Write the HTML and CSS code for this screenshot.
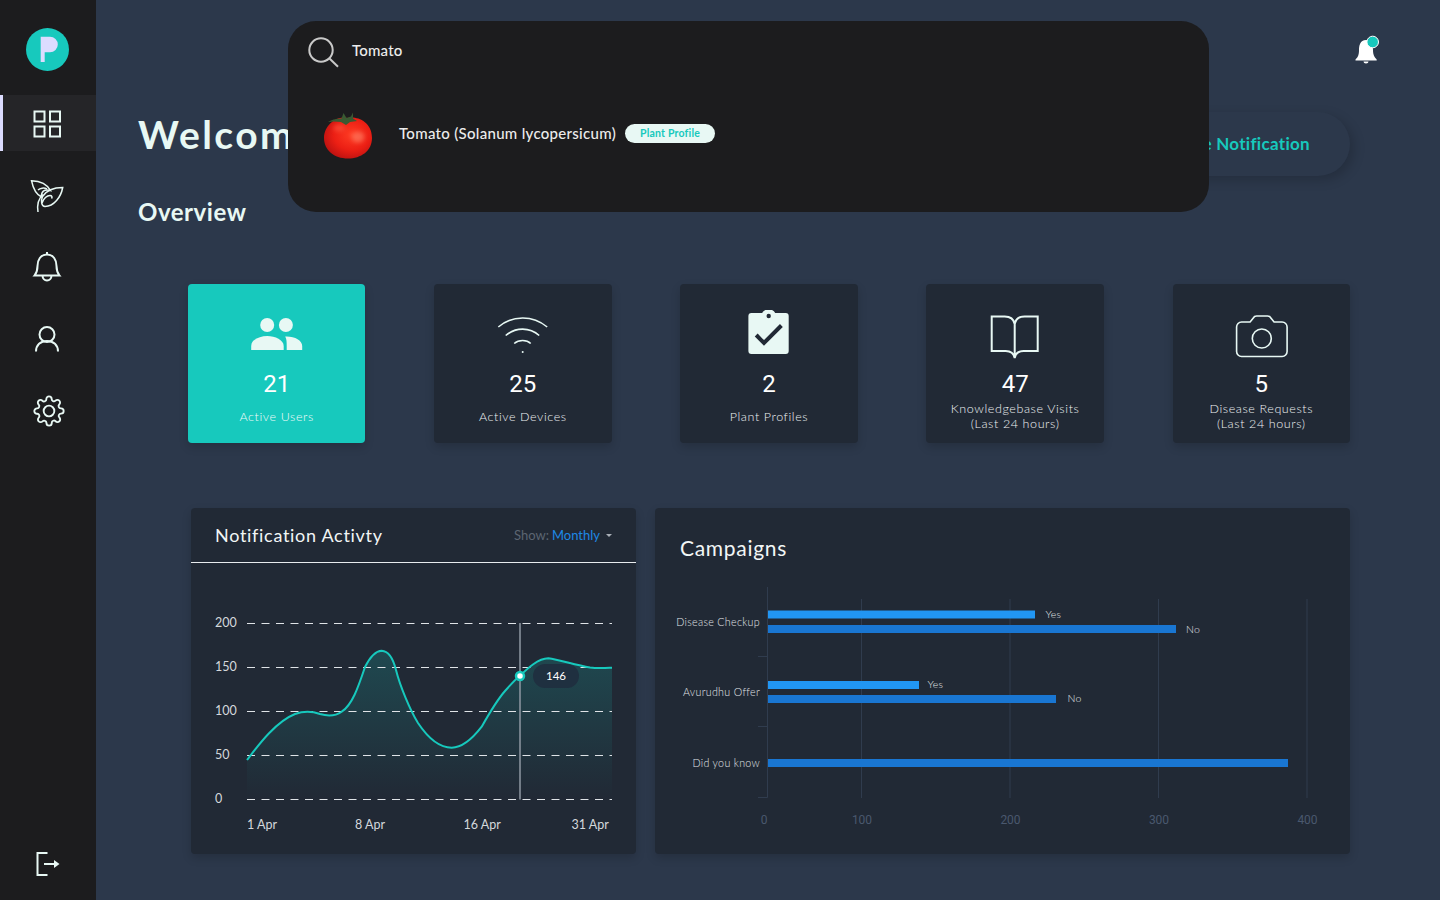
FILE: index.html
```html
<!DOCTYPE html>
<html lang="en">
<head>
<meta charset="utf-8">
<title>Dashboard</title>
<link rel="stylesheet" href="styles.css">
</head>
<body>
<div class="app">
  <aside class="sidebar">
    <div class="logo">
      <svg class="logo-svg" viewBox="26 28 43 43"><circle cx="47.5" cy="49.5" r="21.5" fill="#17c9bd"/><path d="M40.7 36.7H50a7.8 7.8 0 0 1 0 15.6H44.7V62H40.7Z" fill="#dcdcff"/></svg>
    </div>
    <nav class="nav">
      <a class="nav-item active"><svg class="nav-icon" viewBox="0 0 96 56"><g class="ico"><rect x="34.5" y="16.5" width="10" height="10"/><rect x="50" y="16.5" width="10" height="10"/><rect x="34.5" y="31.5" width="10" height="10"/><rect x="50" y="31.5" width="10" height="10"/></g></svg></a>
      <a class="nav-item"><svg class="nav-icon" viewBox="0 167 96 56"><g class="ico thin"><path d="M31.500 180.700C39 181 47 184 50.500 190.500C44 188.500 41 192 41.500 197C36 194.500 33 188 31.500 180.700Z"/><path d="M38 190C40 188 44 187.500 47 189"/><path d="M62.700 187.500C61 197 54 206.500 45 206.500C41.500 206.500 40.500 201 42.500 196.500C46.500 190.500 54 187.500 62.700 187.500Z"/><path d="M38 212C37 205 39 198 43 194.500"/><path d="M42 203C43.500 198.500 47 195.500 50 195.500C52 195.500 52.500 197 51.500 198.500"/></g></svg></a>
      <a class="nav-item"><svg class="nav-icon" viewBox="0 239 96 56"><g class="ico"><path d="M47 254.500C40.500 254.500 37.500 260 37.500 266C37.500 271 36.500 273 34.500 275.500H59.500C57.500 273 56.500 271 56.500 266C56.500 260 53.500 254.500 47 254.500ZM47 252V254.500M42.500 275.500a4.500 5 0 0 0 9 0"/></g></svg></a>
      <a class="nav-item"><svg class="nav-icon" viewBox="0 311 96 56"><g class="ico"><circle cx="47" cy="334.500" r="7.500"/><path d="M36 351.500C36 345 40.500 341 47 341C53.500 341 58 345 58 351.500"/></g></svg></a>
      <a class="nav-item"><svg class="gear-icon" viewBox="0 0 24 24"><g class="ico gear"><circle cx="12" cy="12" r="4"/><path d="M19.400 15a1.650 1.650 0 0 0 .33 1.820l.06.06a2 2 0 0 1 0 2.830 2 2 0 0 1-2.830 0l-.06-.06a1.650 1.650 0 0 0-1.820-.33 1.650 1.650 0 0 0-1 1.510V21a2 2 0 0 1-2 2 2 2 0 0 1-2-2v-.09A1.650 1.650 0 0 0 9 19.400a1.650 1.650 0 0 0-1.820.33l-.06.06a2 2 0 0 1-2.830 0 2 2 0 0 1 0-2.830l.06-.06a1.650 1.650 0 0 0 .33-1.820 1.650 1.650 0 0 0-1.510-1H3a2 2 0 0 1-2-2 2 2 0 0 1 2-2h.09A1.650 1.650 0 0 0 4.600 9a1.650 1.650 0 0 0-.33-1.820l-.06-.06a2 2 0 0 1 0-2.830 2 2 0 0 1 2.830 0l.06.06a1.650 1.650 0 0 0 1.820.33H9a1.650 1.650 0 0 0 1-1.510V3a2 2 0 0 1 2-2 2 2 0 0 1 2 2v.09a1.650 1.650 0 0 0 1 1.510 1.650 1.650 0 0 0 1.820-.33l.06-.06a2 2 0 0 1 2.830 0 2 2 0 0 1 0 2.830l-.06.06a1.650 1.650 0 0 0-.33 1.820V9a1.650 1.650 0 0 0 1.510 1H21a2 2 0 0 1 2 2 2 2 0 0 1-2 2h-.09a1.650 1.650 0 0 0-1.510 1z"/></g></svg></a>
    </nav>
    <a class="logout"><svg class="nav-icon" viewBox="0 836 96 56"><path class="ico" d="M47.500 853H37.500V875H47.500M44 864H55"/><path d="M54 860L59.500 864L54 868Z" fill="#e8f8f4"/></svg></a>
  </aside>

  <main class="main">
    <div class="topbar">
      <svg class="top-bell" viewBox="1352 32 28 32">
        <path d="M1366 40C1360 40 1359 46 1359 50C1359 55 1358 57 1355.500 59.500V60.500H1376.700V59.500C1374.500 57 1373 55 1373 50C1373 46 1372 40 1366 40Z" fill="#fff"/>
        <path d="M1363.500 61.500h5a2.500 2 0 0 1-5 0Z" fill="#fff"/>
        <circle cx="1372.700" cy="42" r="5.800" fill="#17c9bd" stroke="#fff" stroke-width="1"/>
      </svg>
    </div>

    <div class="heading-row">
      <h1 class="welcome">Welcome</h1>
      <button class="create-btn">Create Notification</button>
    </div>
    <h2 class="overview">Overview</h2>

    <section class="stats">
      <div class="stat stat-active">
        <svg class="stat-icon" viewBox="188 310 177 54"><g fill="#e8f8f4"><circle cx="267" cy="325" r="7"/><circle cx="285.700" cy="325" r="7"/><path d="M251 350V346C251 340 259 336 267 336C275 336 283.500 340 283.500 346V350Z"/><path d="M285 336.500C294 336 302 340 302 346V350H286.500V346C286.500 342 286.500 339 285 336.500Z"/></g></svg>
        <div class="stat-num">21</div>
        <div class="stat-label">Active Users</div>
      </div>
      <div class="stat">
        <svg class="stat-icon" viewBox="434.500 310 177 54"><g class="line-ico"><path d="M498.600 327C513 315 533 315 547.500 327"/><path d="M506 335.500C516 327 530 327 539.500 335.500"/><path d="M514.500 343.500C519 339.500 527 339.500 531 343.500"/></g><circle cx="523" cy="352" r="1" fill="#e8f8f4"/></svg>
        <div class="stat-num">25</div>
        <div class="stat-label">Active Devices</div>
      </div>
      <div class="stat">
        <svg class="stat-icon" viewBox="680.500 310 177 54"><path d="M751.700 313H762.500A6.800 5 0 0 1 775.500 313H786A3 3 0 0 1 789 316V351A3 3 0 0 1 786 354H751.700A3 3 0 0 1 748.700 351V316A3 3 0 0 1 751.700 313Z" fill="#e8f8f4"/><circle cx="769" cy="316" r="2.200" fill="#212935"/><path d="M756.500 335L764.300 343L781.700 325.500" fill="none" stroke="#212935" stroke-width="4"/></svg>
        <div class="stat-num">2</div>
        <div class="stat-label">Plant Profiles</div>
      </div>
      <div class="stat">
        <svg class="stat-icon" viewBox="926.500 310 177 54"><g class="line-ico wide"><path d="M992 316.500H1005C1010 316.500 1014 319 1015 324C1016 319 1020 316.500 1025 316.500H1038V351H1024C1019 351 1016 353 1015 358C1014 353 1011 351 1006 351H992ZM1015 324V358"/></g></svg>
        <div class="stat-num">47</div>
        <div class="stat-label">Knowledgebase Visits<br>(Last 24 hours)</div>
      </div>
      <div class="stat">
        <svg class="stat-icon" viewBox="1172.600 310 177 54"><g class="line-ico"><path d="M1241 322H1249.500L1254 316.500Q1255 316 1256 316H1267Q1268 316 1269 316.500L1273.500 322H1281.500A5 5 0 0 1 1286.500 327V351.500A5 5 0 0 1 1281.500 356.500H1241A5 5 0 0 1 1236 351.500V327A5 5 0 0 1 1241 322Z"/><circle cx="1261.200" cy="338.500" r="9.500"/></g></svg>
        <div class="stat-num">5</div>
        <div class="stat-label">Disease Requests<br>(Last 24 hours)</div>
      </div>
    </section>

    <section class="panels">
      <div class="panel panel-activity">
        <header class="panel-head">
          <h3 class="panel-title">Notification Activty</h3>
          <div class="show">Show: <span class="show-val">Monthly</span><span class="caret"></span></div>
        </header>
        <svg class="chart" viewBox="191 563 445 291">
          <defs>
            <linearGradient id="areaGrad" x1="0" y1="0" x2="0" y2="1">
              <stop offset="0" stop-color="#17c9bd" stop-opacity=".2"/>
              <stop offset="1" stop-color="#17c9bd" stop-opacity="0"/>
            </linearGradient>
          </defs>
          <path d="M247 760C257 747 275 722 295 714C303 711 312 711 320 714C327 716 334 717 341.700 711.700C352 705 358 688 365 667C370 657 375 651 381.700 650.700C388 651 393 658 396 670C400 686 410 710 418 723C428 738 440 747.700 451.700 747.700C463 747.700 473 738 481.700 726.700C490 712 498 699 505 691C512 683 516 679 519.700 676C528 668 538 658.500 548.300 658.300C560 660 575 665 590 667.500C598 668.500 605 668 612 667.700V799H247Z" fill="url(#areaGrad)"/>
          <g class="grid-line">
            <path d="M247 623.500H612"/><path d="M247 667.500H612"/><path d="M247 711.500H612"/><path d="M247 755.500H612"/><path d="M247 799.500H612"/>
          </g>
          <path d="M520 623V799.500" stroke="#8f98a3" stroke-width="1.500"/>
          <path d="M247 760C257 747 275 722 295 714C303 711 312 711 320 714C327 716 334 717 341.700 711.700C352 705 358 688 365 667C370 657 375 651 381.700 650.700C388 651 393 658 396 670C400 686 410 710 418 723C428 738 440 747.700 451.700 747.700C463 747.700 473 738 481.700 726.700C490 712 498 699 505 691C512 683 516 679 519.700 676C528 668 538 658.500 548.300 658.300C560 660 575 665 590 667.500C598 668.500 605 668 612 667.700" fill="none" stroke="#17c9bd" stroke-width="2"/>
          <circle cx="520" cy="676" r="4" fill="#fff" stroke="#17c9bd" stroke-width="2.500"/>
          <rect x="533" y="664" width="46" height="24" rx="12" fill="#1f3040"/>
          <text class="tip-text" x="556" y="680">146</text>
          <text class="axis-text" x="215" y="627">200</text>
          <text class="axis-text" x="215" y="671">150</text>
          <text class="axis-text" x="215" y="715">100</text>
          <text class="axis-text" x="215" y="759">50</text>
          <text class="axis-text" x="215" y="803">0</text>
          <text class="axis-text" x="247" y="829">1 Apr</text>
          <text class="axis-text" x="355" y="829">8 Apr</text>
          <text class="axis-text" x="463.500" y="829">16 Apr</text>
          <text class="axis-text" x="571.500" y="829">31 Apr</text>
        </svg>
      </div>

      <div class="panel panel-campaigns">
        <h3 class="panel-title campaigns-title">Campaigns</h3>
        <svg class="chart" viewBox="655 563 695 291">
          <g class="bar-grid">
            <path d="M861.500 599V798"/><path d="M1010 599V798"/><path d="M1158.500 599V798"/><path d="M1307 599V798"/>
            <path d="M767.500 587V797.500"/><path d="M758 656.500H767.500"/><path d="M758 726.500H767.500"/><path d="M758 797.500H767.500"/>
          </g>
          <rect class="bar-yes" x="768" y="610.500" width="267" height="8"/>
          <rect class="bar-no" x="768" y="625" width="408" height="8"/>
          <rect class="bar-yes" x="768" y="681" width="151" height="8"/>
          <rect class="bar-no" x="768" y="695" width="288" height="8"/>
          <rect class="bar-no" x="768" y="759" width="520" height="8"/>
          <text class="cat-text" x="760" y="625.500">Disease Checkup</text>
          <text class="cat-text" x="760" y="695.500">Avurudhu Offer</text>
          <text class="cat-text" x="760" y="766.500">Did you know</text>
          <text class="val-text" x="1045.500" y="618">Yes</text>
          <text class="val-text" x="1186" y="633">No</text>
          <text class="val-text" x="927.500" y="688">Yes</text>
          <text class="val-text" x="1067.500" y="702">No</text>
          <text class="tick-text" x="764" y="824">0</text>
          <text class="tick-text" x="862" y="824">100</text>
          <text class="tick-text" x="1010.500" y="824">200</text>
          <text class="tick-text" x="1159" y="824">300</text>
          <text class="tick-text" x="1307.500" y="824">400</text>
        </svg>
      </div>
    </section>

    <div class="search-pop">
      <div class="search-row">
        <svg class="search-icon" viewBox="306 35 34 34"><circle cx="321" cy="50" r="11.700" fill="none" stroke="#c9c9c9" stroke-width="2"/><path d="M329.500 58.500L338 66.700" stroke="#c9c9c9" stroke-width="2"/></svg>
        <span class="search-text">Tomato</span>
      </div>
      <div class="result-row">
        <svg class="tomato" viewBox="320 108 56 56">
          <defs>
            <radialGradient id="tomGrad" cx=".58" cy=".42" r=".68">
              <stop offset="0" stop-color="#ff3d24"/>
              <stop offset=".55" stop-color="#ec1f14"/>
              <stop offset="1" stop-color="#b30f10"/>
            </radialGradient>
            <filter id="soft" x="-50%" y="-50%" width="200%" height="200%"><feGaussianBlur stdDeviation="2"/></filter>
          </defs>
          <path d="M348 118C356 116 372 121 372 138C372 151 361 158.500 348 158.500C334 158.500 324 150 324 138C324 124 338 115 348 118Z" fill="url(#tomGrad)"/>
          <ellipse cx="358" cy="137" rx="6.500" ry="5.500" fill="#ff8a70" opacity=".55" filter="url(#soft)"/>
          <ellipse cx="339" cy="128" rx="6" ry="3.500" fill="#ff6a50" opacity=".45" filter="url(#soft)"/>
          <path d="M328 122C333 119 338 118.500 341.500 118.500L343.500 113L346.500 118L351 116.500L353 112.500L353 118.500L357 121L350 122L346 125L341 122C337 121.500 332 121 328 122Z" fill="#3a5a32"/>
        </svg>
        <span class="result-name">Tomato (Solanum lycopersicum)</span>
        <span class="pill">Plant Profile</span>
      </div>
    </div>
  </main>
</div>
</body>
</html>
```

FILE: styles.css
```css
* { box-sizing: border-box; }
html, body { margin: 0; padding: 0; }
body {
  width: 1440px;
  height: 900px;
  overflow: hidden;
  background: #2c384b;
  font-family: "Lato", "Open Sans", sans-serif;
  color: #e8f8f4;
}
.app { display: flex; height: 900px; }

/* Sidebar */
.sidebar {
  width: 96px;
  flex: none;
  background: #1c1c1e;
  display: flex;
  flex-direction: column;
  padding-bottom: 8px;
}
.logo { height: 95px; padding: 28px 0 0 26px; }
.logo-svg { display: block; width: 43px; height: 43px; }
.nav { display: flex; flex-direction: column; gap: 16px; }
.nav-item, .logout { display: flex; height: 56px; align-items: center; justify-content: center; }
.nav-item.active { background: #252528; box-shadow: inset 3px 0 0 #dcdcff; }
.nav-icon { display: block; width: 96px; height: 56px; flex: none; }
.gear-icon { display: block; width: 32px; height: 32px; margin-left: 1px; }
.logout { margin-top: auto; }
.ico { fill: none; stroke: #e8f8f4; stroke-width: 2; }
.ico.thin { stroke-width: 1.500; }
.ico.gear { stroke-width: 1.400; }

/* Main */
.main { position: relative; flex: 1; min-width: 0; }
.topbar { height: 112px; display: flex; justify-content: flex-end; padding: 32px 60px 0 0; }
.top-bell { display: block; width: 28px; height: 32px; }
.heading-row {
  height: 64px;
  display: flex;
  align-items: center;
  justify-content: space-between;
  padding: 0 90px 0 42px;
}
.welcome {
  margin: 0 0 20px;
  font-size: 39px;
  line-height: 46px;
  font-weight: 700;
  letter-spacing: 2.400px;
  color: #e8f8f4;
  white-space: nowrap;
}
.create-btn {
  height: 64px;
  padding: 0 40px 2px;
  border: 0;
  border-radius: 32px;
  background: #2c384b;
  box-shadow: 4px 4px 12px rgba(0, 0, 0, .18);
  color: #17c9bd;
  font: 700 17px "Lato", sans-serif;
  letter-spacing: .3px;
}
.overview {
  margin: 20px 0 0 42px;
  font-size: 24px;
  line-height: 31px;
  font-weight: 700;
  letter-spacing: .55px;
}

/* Stats */
.stats {
  display: grid;
  grid-template-columns: repeat(5, 1fr);
  gap: 68.750px;
  margin: 57px 90px 0 92px;
}
.stat {
  height: 159px;
  background: #212935;
  border-radius: 4px;
  box-shadow: 0 4px 10px rgba(0, 0, 0, .16);
  padding-top: 26px;
  text-align: center;
}
.stat-active { background: #17c9bd; }
.stat-icon { display: block; width: 100%; height: 54px; }
.stat-num {
  margin-top: 6px;
  font: 400 24px/28px "Roboto", sans-serif;
  color: #fff;
}
.stat-label {
  height: 30px;
  margin-top: 3px;
  display: flex;
  flex-direction: column;
  align-items: center;
  justify-content: center;
  font-size: 12.500px;
  font-weight: 300;
  line-height: 15px;
  letter-spacing: .6px;
  color: #eef1f3;
}
.stat-active .stat-label { color: #f2fbf9; }
.line-ico { fill: none; stroke: #e8f8f4; stroke-width: 1.600; }
.line-ico.wide { stroke-width: 2; }

/* Panels */
.panels { display: flex; gap: 19px; margin: 65px 90px 0 95px; }
.panel {
  height: 346px;
  background: #212935;
  border-radius: 4px;
  box-shadow: 0 4px 10px rgba(0, 0, 0, .16);
  display: flex;
  flex-direction: column;
}
.panel-activity { width: 445px; flex: none; }
.panel-campaigns { flex: 1; min-width: 0; position: relative; }
.panel-head {
  height: 55px;
  flex: none;
  display: flex;
  align-items: center;
  justify-content: space-between;
  padding: 0 24px;
  border-bottom: 1px solid #e8ecef;
}
.panel-title { margin: 0; font-size: 18px; font-weight: 400; letter-spacing: .7px; color: #f2f6f6; }
.campaigns-title { height: 55px; flex: none; padding: 27px 0 0 25px; font-size: 21px; line-height: 26px; }
.show { font-size: 13px; color: #5c6572; display: flex; align-items: center; }
.show-val { color: #1e88e5; margin-left: 3px; }
.caret {
  width: 0;
  height: 0;
  margin-left: 6px;
  border: 3px solid transparent;
  border-top-color: #aab0b8;
  border-bottom: 0;
}
.chart { display: block; width: 100%; height: 291px; flex: none; }
.grid-line path { stroke: #dfe3e7; stroke-width: 1; stroke-dasharray: 8 6.500; fill: none; }
.axis-text { font: 400 12.500px "Lato", sans-serif; fill: #d4d8dc; }
.tip-text { font: 400 11.500px "Lato", sans-serif; fill: #fff; text-anchor: middle; }
.bar-grid path { stroke: #303c4e; stroke-width: 1; fill: none; }
.bar-yes { fill: #2196f3; }
.bar-no { fill: #1976d2; }
.cat-text { font: 300 10.700px "Lato", sans-serif; fill: #e0e4e7; text-anchor: end; letter-spacing: .3px; }
.val-text { font: 300 10.500px "Lato", sans-serif; fill: #e0e4e7; letter-spacing: .2px; }
.tick-text { font: 400 12px "Roboto", sans-serif; fill: #4a586e; text-anchor: middle; }

/* Search overlay */
.search-pop {
  position: absolute;
  left: 192px;
  top: 21px;
  width: 921px;
  height: 191px;
  background: #1c1c1e;
  border-radius: 28px;
}
.search-row { height: 64px; display: flex; align-items: center; padding: 0 0 0 18px; gap: 12px; }
.search-icon { display: block; width: 34px; height: 34px; margin-top: -2px; }
.search-text { font-size: 15px; font-weight: 500; letter-spacing: .2px; color: #ececec; margin-top: -7px; }
.result-row { display: flex; align-items: center; height: 56px; margin-top: 20px; padding-left: 32px; }
.tomato { display: block; width: 56px; height: 56px; flex: none; margin-right: 23px; margin-top: 6px; }
.result-name { font-size: 15px; font-weight: 500; color: #ececec; white-space: nowrap; margin-right: 9px; letter-spacing: .3px; }
.pill {
  height: 19px;
  padding: 0 15px;
  border-radius: 10px;
  background: #e8f8f4;
  color: #17c9bd;
  font-size: 10.500px;
  font-weight: 700;
  letter-spacing: .2px;
  line-height: 19px;
  white-space: nowrap;
}
```
